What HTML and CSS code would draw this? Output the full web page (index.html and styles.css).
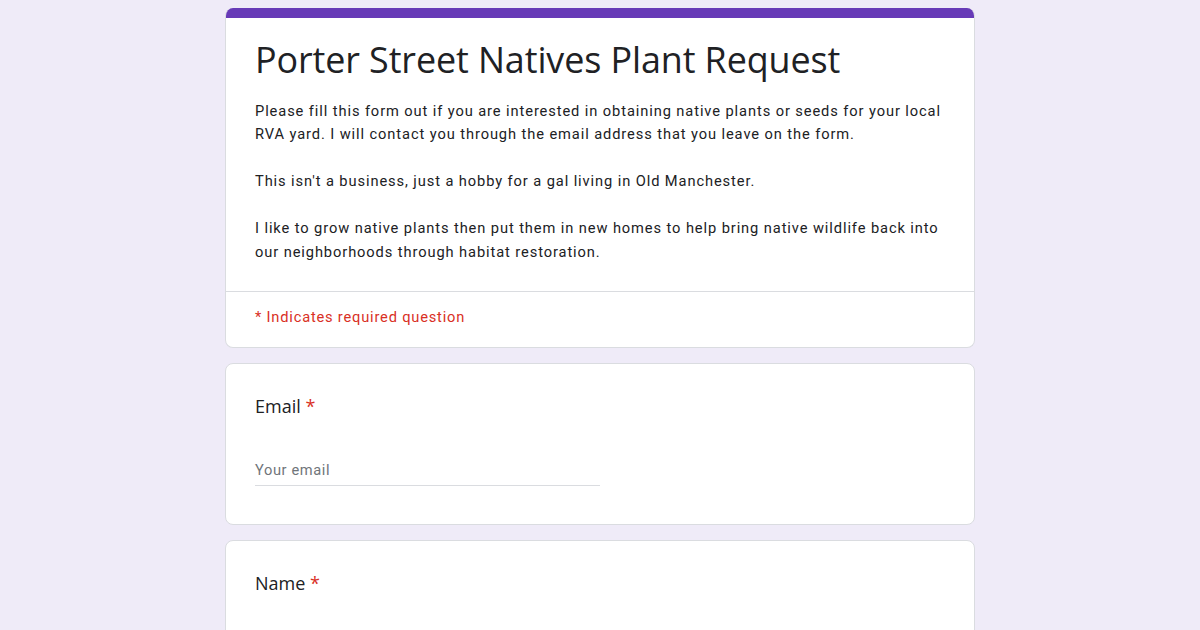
FILE: index.html
```html
<!DOCTYPE html>
<html lang="en">
<head>
<meta charset="utf-8">
<title>Porter Street Natives Plant Request</title>
<link rel="stylesheet" href="styles.css">
</head>
<body>
<main class="form">
  <section class="card header-card">
    <div class="accent"></div>
    <div class="header-body">
      <h1 class="title">Porter Street Natives Plant Request</h1>
      <div class="desc">
        <p>Please fill this form out if you are interested in obtaining native plants or seeds for your local RVA yard. I will contact you through the email address that you leave on the form.</p>
        <p>This isn't a business, just a hobby for a gal living in Old Manchester.</p>
        <p>I like to grow native plants then put them in new homes to help bring native wildlife back into our neighborhoods through habitat restoration.</p>
      </div>
    </div>
    <div class="required-note">* Indicates required question</div>
  </section>

  <section class="card question">
    <div class="label">Email <span class="star">*</span></div>
    <div class="input"><span class="placeholder">Your email</span></div>
  </section>

  <section class="card question">
    <div class="label">Name <span class="star">*</span></div>
    <div class="input"><span class="placeholder">Your answer</span></div>
  </section>
</main>
</body>
</html>
```

FILE: styles.css
```css
* { box-sizing: border-box; }
html, body { margin: 0; padding: 0; }
body {
  background: #efebf8;
  font-family: Roboto, "Liberation Sans", Arial, sans-serif;
  color: #202124;
  height: 630px;
  overflow: hidden;
}
.form {
  width: 750px;
  margin: 8px auto 0;
  display: flex;
  flex-direction: column;
  gap: 15px;
}
.card {
  background: #fff;
  border: 1px solid #dadce0;
  border-radius: 8px;
  overflow: hidden;
}
.header-card { border-top: none; }
.accent {
  height: 10px;
  background: #673ab7;
  margin: 0 -1px;
}
.header-body {
  padding: 20px 29px 27px;
  border-bottom: 1px solid #dadce0;
}
.title {
  margin: 0;
  font-family: "Open Sans", Roboto, sans-serif;
  font-weight: 400;
  font-size: 35.9px;
  line-height: 44px;
  letter-spacing: -0.1px;
  color: #202124;
}
.desc {
  margin-top: 18px;
  font-size: 14.667px;
  line-height: 23.47px;
  letter-spacing: 0.9px;
  color: #202124;
}
.desc p { margin: 0 0 23.47px; }
.desc p:last-child { margin-bottom: 0; }
.required-note {
  padding: 13px 29px 18px;
  font-size: 14.667px;
  line-height: 24px;
  letter-spacing: 0.8px;
  color: #d93025;
}
.question {
  padding: 30px 29px 38px;
}
.label {
  font-family: "Open Sans", Roboto, sans-serif;
  font-size: 18px;
  line-height: 24px;
  color: #202124;
}
.star { color: #d93025; }
.input {
  margin-top: 36px;
  width: 50%;
  height: 32px;
  border-bottom: 1px solid #dadce0;
  display: flex;
  align-items: center;
}
.placeholder {
  font-size: 14.667px;
  letter-spacing: 0.6px;
  color: #70757a;
}
```
